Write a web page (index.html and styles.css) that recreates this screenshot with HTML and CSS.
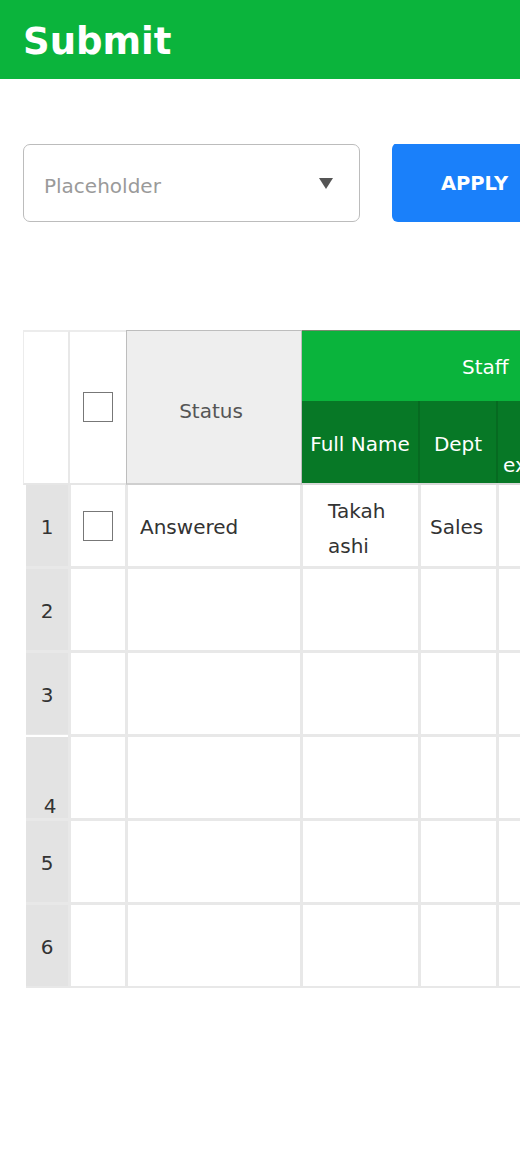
FILE: index.html
```html
<!DOCTYPE html>
<html lang="en">
<head>
<meta charset="utf-8">
<title>Submit</title>
<link rel="stylesheet" href="styles.css">
</head>
<body>
<header class="titlebar"><h1 class="title">Submit</h1></header>

<div class="controls">
  <div class="select">
    <span class="placeholder">Placeholder</span>
    <span class="caret"></span>
  </div>
  <button class="apply">APPLY</button>
</div>

<div class="table-wrap">
  <div class="thead">
    <div class="h-num"></div>
    <div class="h-check"><span class="box"></span></div>
    <div class="h-status">Status</div>
    <div class="h-staff">
      <div class="staff-top">Staff</div>
      <div class="staff-sub">
        <div class="sub sub-name">Full Name</div>
        <div class="sub sub-dept">Dept</div>
        <div class="sub sub-ext">extension</div>
      </div>
    </div>
  </div>

  <div class="tbody">
    <div class="c num">1</div>
    <div class="c chk"><span class="box"></span></div>
    <div class="c status">Answered</div>
    <div class="c name">Takahashi</div>
    <div class="c dept">Sales</div>
    <div class="c ext"></div>

    <div class="c num">2</div>
    <div class="c chk"></div>
    <div class="c status"></div>
    <div class="c name"></div>
    <div class="c dept"></div>
    <div class="c ext"></div>

    <div class="c num">3</div>
    <div class="c chk"></div>
    <div class="c status"></div>
    <div class="c name"></div>
    <div class="c dept"></div>
    <div class="c ext"></div>

    <div class="c num num-low">4</div>
    <div class="c chk"></div>
    <div class="c status"></div>
    <div class="c name"></div>
    <div class="c dept"></div>
    <div class="c ext"></div>

    <div class="c num">5</div>
    <div class="c chk"></div>
    <div class="c status"></div>
    <div class="c name"></div>
    <div class="c dept"></div>
    <div class="c ext"></div>

    <div class="c num">6</div>
    <div class="c chk"></div>
    <div class="c status"></div>
    <div class="c name"></div>
    <div class="c dept"></div>
    <div class="c ext"></div>
  </div>
</div>
</body>
</html>
```

FILE: styles.css
```css
* { box-sizing: border-box; }

html, body {
  margin: 0;
  padding: 0;
  background: #ffffff;
  font-family: "DejaVu Sans", Verdana, sans-serif;
  overflow: hidden;
}

.titlebar {
  height: 79px;
  background: #0bb43c;
  display: flex;
  align-items: center;
  padding-left: 23px;
}

.title {
  margin: 0;
  color: #ffffff;
  font-size: 37px;
  font-weight: bold;
  line-height: 1;
  padding-top: 3px;
}

.controls {
  margin-top: 65px;
  padding-left: 23px;
  display: flex;
  gap: 32px;
  height: 78px;
  overflow: hidden;
}

.select {
  flex: 0 0 337px;
  height: 78px;
  border: 1px solid #bcbcbc;
  border-radius: 7px;
  display: flex;
  align-items: center;
  justify-content: space-between;
  padding: 0 26px 0 20px;
}

.placeholder {
  color: #9a9a9a;
  font-size: 20px;
  padding-top: 6px;
}

.caret {
  width: 0;
  height: 0;
  border-left: 7px solid transparent;
  border-right: 7px solid transparent;
  border-top: 11px solid #555555;
}

.apply {
  flex: 0 0 165px;
  height: 79px;
  margin-top: -1px;
  border: none;
  border-radius: 6px;
  background: #1a80fa;
  color: #ffffff;
  font-family: "DejaVu Sans", Verdana, sans-serif;
  font-weight: bold;
  font-size: 19.5px;
  padding: 1px 0 0 0;
}

.table-wrap {
  margin-top: 108px;
  margin-left: 23px;
  overflow: hidden;
  width: 497px;
}

.thead {
  display: flex;
  height: 155px;
  width: 720px;
}

.h-num {
  flex: 0 0 47px;
  border-top: 2px solid #ececec;
  border-left: 1px solid #ececec;
  border-bottom: 2px solid #e6e6e6;
  border-right: 2px solid #e8e8e8;
}

.h-check {
  flex: 0 0 56px;
  border-top: 2px solid #ececec;
  border-bottom: 2px solid #e6e6e6;
  display: flex;
  align-items: center;
  justify-content: center;
  padding-bottom: 2px;
}

.box {
  display: block;
  width: 30px;
  height: 30px;
  border: 1.5px solid #777777;
  background: #ffffff;
}

.h-status {
  flex: 0 0 176px;
  background: #eeeeee;
  border: 1px solid #bdbdbd;
  border-bottom: 2px solid #cfcfcf;
  display: flex;
  align-items: center;
  justify-content: center;
  color: #555555;
  font-size: 20px;
  padding: 8px 6px 0 0;
}

.h-staff {
  flex: 0 0 380px;
  display: flex;
  flex-direction: column;
}

.staff-top {
  height: 71px;
  background: #0ab43c;
  border-top: 1px solid #7a8a70;
  color: #ffffff;
  font-size: 20px;
  display: flex;
  align-items: center;
  padding-left: 160px;
  padding-top: 2px;
}

.staff-sub {
  flex: 1;
  display: flex;
  background: #077826;
  border-bottom: 2px solid #d8d8d8;
}

.sub {
  color: #ffffff;
  font-size: 20px;
  display: flex;
  align-items: center;
  justify-content: center;
  border-right: 2px solid #066a21;
  padding-top: 3px;
}

.sub-name { flex: 0 0 118px; }
.sub-dept { flex: 0 0 78px; }
.sub-ext {
  flex: 0 0 180px;
  border-right: none;
  justify-content: flex-start;
  align-items: flex-end;
  padding: 0 0 6px 5px;
}

.tbody {
  margin-left: 3px;
  width: 700px;
  display: grid;
  grid-template-columns: 42px 54px 172px 115px 75px 200px;
  grid-auto-rows: 81px;
  gap: 3px;
  background: #e8e8e8;
  padding-bottom: 2px;
}

.c {
  background: #ffffff;
  display: flex;
  align-items: center;
  font-size: 20px;
  color: #333333;
  padding-top: 2px;
}

.num {
  background: #e3e3e3;
  justify-content: center;
}

.num-low {
  align-items: flex-end;
  padding-left: 6px;
  padding-top: 0;
  box-shadow: 0 -2px 0 #ffffff;
}

.chk { justify-content: center; padding-top: 0; }

.status { padding-left: 12px; }

.name {
  padding: 6px 25px 0 25px;
  line-height: 35px;
  word-break: break-all;
}

.dept { padding-left: 9px; }
```
